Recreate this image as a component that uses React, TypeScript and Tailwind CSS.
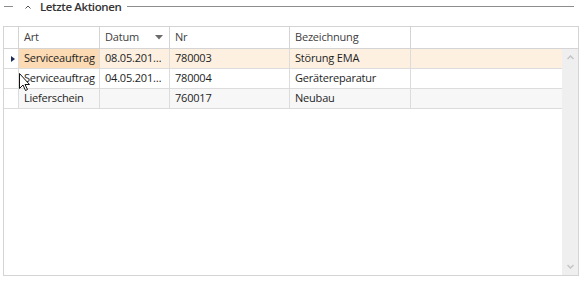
import React from "react";

interface Row {
    art: string;
    datum: string;
    nr: string;
    bez: string;
}

const rows: Row[] = [
    { art: "Serviceauftrag", datum: "08.05.201…", nr: "780003", bez: "Störung EMA" },
    { art: "Serviceauftrag", datum: "04.05.201…", nr: "780004", bez: "Gerätereparatur" },
    { art: "Lieferschein", datum: "", nr: "760017", bez: "Neubau" },
];

const cols = "grid grid-cols-[15px_81px_70px_120px_121px_1fr]";
const font = { fontFamily: '"Open Sans", "Noto Sans", sans-serif' };

const App = () => {
    return (
        <div className="relative w-[582px] h-[282px] bg-white text-[11px] tracking-[-0.2px] text-[#1e1e1e]" style={font}>

            {/* Group header */}
            <div className="flex items-center h-[13px] pr-[8px]">
                <div className="ml-[4px] w-[9px] h-px bg-[#8c8c8c]" />
                <svg width="6" height="4" viewBox="0 0 6 4" className="ml-[12px]">
                    <path d="M0.5 3.5 L3 1 L5.5 3.5" fill="none" stroke="#555" strokeWidth="1" />
                </svg>
                <span className="ml-[9px] font-semibold text-[11.5px] tracking-[-0.4px] leading-[13px] text-[#333]">Letzte Aktionen</span>
                <div className="ml-[6px] flex-1 h-px bg-[#8c8c8c]" />
            </div>

            {/* Grid */}
            <div className="mt-[13px] ml-[3px] w-[576px] h-[250px] border border-[#d4d4d4] flex flex-col">

                {/* Column headers */}
                <div className={`${cols} h-[22px] border-b border-[#d4d4d4] text-[#404040]`}>
                    <div className="border-r border-[#d4d4d4]" />
                    <div className="border-r border-[#d4d4d4] pl-[5px] flex items-center">Art</div>
                    <div className="border-r border-[#d4d4d4] pl-[5px] pr-[6px] flex items-center justify-between">
                        <span>Datum</span>
                        <svg width="8" height="5" viewBox="0 0 8 5">
                            <path d="M0 0 H8 L4 4.5 Z" fill="#6b6b6b" />
                        </svg>
                    </div>
                    <div className="border-r border-[#d4d4d4] pl-[5px] flex items-center">Nr</div>
                    <div className="border-r border-[#d4d4d4] pl-[5px] flex items-center">Bezeichnung</div>
                    <div />
                </div>

                {/* Body */}
                <div className="flex flex-1">
                    <div className="flex-1">
                        {rows.map((r, i) => {
                            const selected = i === 0;
                            const rowBg = selected ? "bg-[#fdf0e1]" : i % 2 === 1 ? "bg-white" : "bg-[#f7f7f7]";
                            return (
                                <div key={i} className={`${cols} h-[20px] border-b border-[#dcdcdc] ${rowBg}`}>
                                    <div className="border-r border-[#dcdcdc] bg-white flex items-center pl-[7px]">
                                        {selected && (
                                            <svg width="4" height="6" viewBox="0 0 4 6">
                                                <path d="M0 0 L4 3 L0 6 Z" fill="#1c2c55" />
                                            </svg>
                                        )}
                                    </div>
                                    <div className={`border-r border-[#dcdcdc] pl-[5px] flex items-center whitespace-nowrap overflow-hidden ${selected ? "bg-[#fcdbb4]" : ""}`}>{r.art}</div>
                                    <div className="border-r border-[#dcdcdc] pl-[5px] flex items-center">{r.datum}</div>
                                    <div className="border-r border-[#dcdcdc] pl-[5px] flex items-center">{r.nr}</div>
                                    <div className="border-r border-[#dcdcdc] pl-[5px] flex items-center">{r.bez}</div>
                                    <div />
                                </div>
                            );
                        })}
                    </div>

                    {/* Scrollbar */}
                    <div className="w-[16px] bg-[#efefef] flex flex-col items-center justify-between py-[6px]">
                        <svg width="7" height="5" viewBox="0 0 7 5">
                            <path d="M0.5 4 L3.5 1 L6.5 4" fill="none" stroke="#c4c4c4" strokeWidth="1.5" />
                        </svg>
                        <svg width="7" height="5" viewBox="0 0 7 5">
                            <path d="M0.5 1 L3.5 4 L6.5 1" fill="none" stroke="#c4c4c4" strokeWidth="1.5" />
                        </svg>
                    </div>
                </div>
            </div>

            {/* Mouse cursor */}
            <svg width="12" height="19" viewBox="0 0 12 19" className="absolute left-[19px] top-[73px]">
                <path d="M0.5 0.5 V15.5 L4 12 L6.5 17.5 L8.5 16.5 L6 11.5 H10.5 Z" fill="white" stroke="#111" strokeWidth="1" strokeLinejoin="round" />
            </svg>
        </div>
    );
};

export default App;
